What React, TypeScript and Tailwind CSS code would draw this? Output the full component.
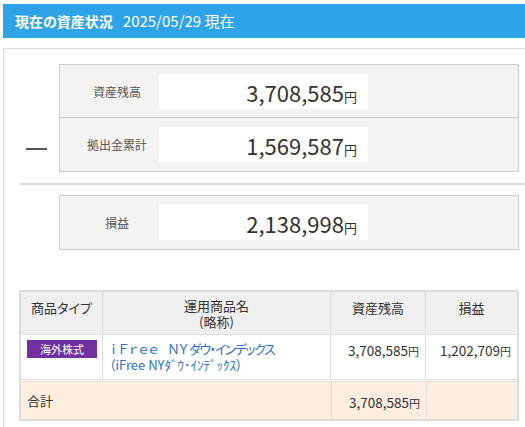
import React from "react";

const font = "font-['Noto_Sans_CJK_JP','Noto_Sans',sans-serif]";

function Yen({ v, big }: { v: string; big?: boolean }) {
  return (
    <span className="whitespace-nowrap">
      <span className={big ? "text-[22px]" : "text-[13.5px]"}>{v}</span>
      <span className={big ? "text-[13px]" : "text-[11px]"}>円</span>
    </span>
  );
}

function Row({ label, value, last }: { label: string; value: string; last?: boolean }) {
  return (
    <div className={`flex h-[53px] items-start ${last ? "" : "border-b border-[#cccccc]"}`}>
      <div className="flex h-[53px] w-[99px] items-center justify-center pl-[15px] text-[12px] text-[#555555]">
        {label}
      </div>
      <div className="mt-[9px] flex h-[35px] w-[209px] items-center justify-end bg-white pr-[11px] leading-none text-[#333333]">
        <Yen v={value} big />
      </div>
    </div>
  );
}

export default function App() {
  return (
    <div className={`h-[427px] w-[525px] overflow-hidden bg-white ${font} [font-feature-settings:'palt']`}>
      <div className="pl-[3px] pt-[4px]">
        <div className="flex h-[34px] w-[560px] items-center gap-[10px] bg-[#2fa3e8] pl-[12px] text-white">
          <span className="text-[14px] font-bold">現在の資産状況</span>
          <span className="text-[15px]">2025/05/29 現在</span>
        </div>
        <div className="mt-[10px] w-[560px] border-l border-t border-[#dddddd] pb-[20px]">
          <div className="flex pt-[15px]">
            <div className="flex w-[55px] flex-col">
              <div className="ml-[22px] mt-[84px] h-[2px] w-[21px] bg-[#555555]" />
            </div>
            <div className="w-[460px] border border-[#cccccc] bg-[#f4f3f1]">
              <Row label="資産残高" value="3,708,585" />
              <Row label="拠出金累計" value="1,569,587" last />
            </div>
          </div>
          <div className="ml-[15px] mt-[11px] h-[2px] bg-[#dddddd]" />
          <div className="ml-[55px] mt-[10px] w-[460px] border border-[#cccccc] bg-[#f4f3f1]">
            <Row label="損益" value="2,138,998" last />
          </div>
          <div className="ml-[15px] mt-[40px] w-[500px] border-2 border-[#dddddd]">
            <div className="flex h-[43px] border-b border-[#dddddd] bg-[#efefef] text-[13px] text-[#333333]">
              <div className="w-[82px] border-r border-[#dddddd] pt-[8px] text-center leading-[16px]">商品タイプ</div>
              <div className="w-[228px] border-r border-[#dddddd] pt-[6px] text-center">
                <div className="leading-[16px]">運用商品名</div>
                <div className="leading-[16px]">(略称)</div>
              </div>
              <div className="w-[95px] border-r border-[#dddddd] pt-[8px] text-center leading-[16px]">資産残高</div>
              <div className="flex-1 pt-[8px] text-center leading-[16px]">損益</div>
            </div>
            <div className="flex h-[45px] border-b border-[#dddddd] bg-white text-[#333333]">
              <div className="w-[82px] border-r border-[#dddddd] pl-[6px] pt-[5px]">
                <div className="flex h-[18px] w-[70px] items-center justify-center bg-[#7030a0] text-[11px] leading-[18px] text-white">
                  海外株式
                </div>
              </div>
              <div className="w-[228px] border-r border-[#dddddd] pl-[6px] pt-[6px] text-[13px] text-[#2a6fc9]">
                <div className="h-[16px] whitespace-nowrap leading-[16px]">
                  <span className="ml-[-2px] tracking-[-3px] [font-feature-settings:normal]">ｉＦｒｅｅ　ＮＹ</span>
                  <span className="ml-[2px] tracking-[-1.5px]">ダウ・インデックス</span>
                </div>
                <div className="h-[16px] whitespace-nowrap leading-[16px]">（iFree NYﾀﾞｳ･ｲﾝﾃﾞｯｸｽ）</div>
              </div>
              <div className="w-[95px] border-r border-[#dddddd] pr-[6px] pt-[6px] text-right leading-[16px]">
                <Yen v="3,708,585" />
              </div>
              <div className="flex-1 pr-[6px] pt-[6px] text-right leading-[16px]">
                <Yen v="1,202,709" />
              </div>
            </div>
            <div className="h-[1px] bg-white" />
            <div className="flex h-[38px] border-t border-[#dddddd] bg-[#fdeee0] text-[#333333]">
              <div className="flex w-[311px] items-center border-r border-[#dddddd] pl-[6px] text-[13px]">合計</div>
              <div className="flex w-[95px] items-center justify-end border-r border-[#dddddd] pr-[6px]">
                <Yen v="3,708,585" />
              </div>
              <div className="flex-1" />
            </div>
          </div>
        </div>
      </div>
    </div>
  );
}
